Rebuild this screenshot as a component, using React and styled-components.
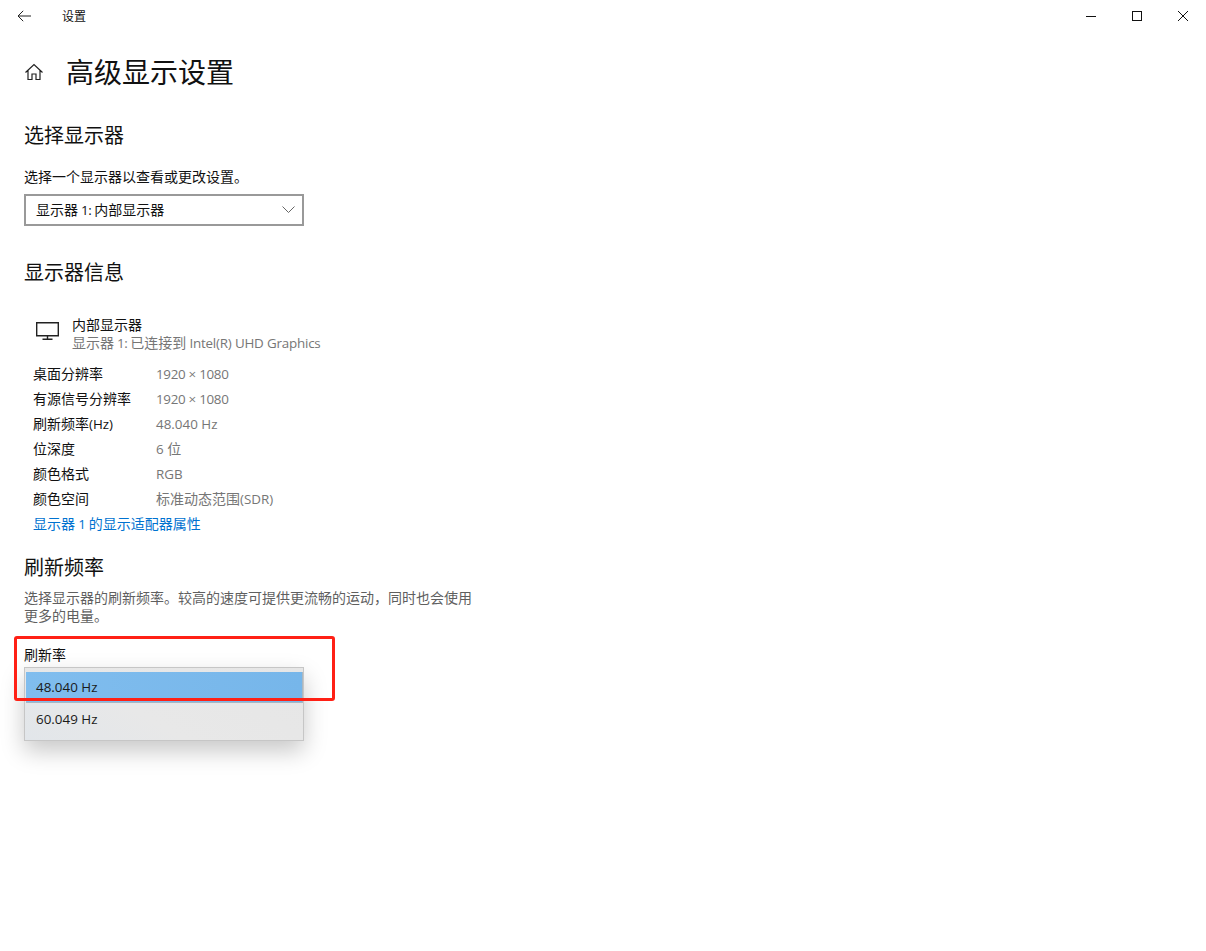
import React from "react";
import styled, { createGlobalStyle } from "styled-components";

const Global = createGlobalStyle`
  html, body { margin: 0; padding: 0; background: #fff; }
  body { font-family: "Noto Sans CJK SC", "Open Sans", sans-serif; color: #111; }
`;

const Page = styled.div`
  position: relative;
  width: 1206px;
  height: 951px;
  overflow: hidden;
  background: #fff;
`;

const Latin = styled.span`
  font-family: "Open Sans", "Noto Sans CJK SC", sans-serif;
  font-size: 13.4px;
  letter-spacing: ${(p) => p.$tight || 0}px;
`;

const TitleBar = styled.header`
  display: flex;
  align-items: center;
  height: 32px;
`;

const BackButton = styled.div`
  display: flex;
  align-items: center;
  justify-content: center;
  width: 48px;
  height: 32px;
`;

const AppName = styled.span`
  margin-left: 14px;
  font-size: 12px;
  line-height: 32px;
  color: #111;
`;

const WindowControls = styled.div`
  display: flex;
  margin-left: auto;
`;

const WindowButton = styled.div`
  display: flex;
  align-items: center;
  justify-content: center;
  width: 46px;
  height: 32px;
`;

const Content = styled.main`
  padding: 0 0 0 24px;
`;

const PageHead = styled.div`
  display: flex;
  align-items: center;
  height: 48px;
  margin-top: 16px;
`;

const HomeIcon = styled.svg`
  display: block;
  width: 20px;
  height: 20px;
`;

const PageTitle = styled.h1`
  margin: 0 0 2px 22px;
  font-size: 28px;
  font-weight: 400;
  line-height: 46px;
  color: #111;
`;

const SectionTitle = styled.h2`
  margin: ${(p) => p.$top}px 0 0;
  font-size: 20px;
  font-weight: 400;
  line-height: 28px;
  color: #111;
`;

const Label = styled.div`
  margin-top: ${(p) => p.$top}px;
  font-size: 14px;
  line-height: 20px;
  color: #111;
`;

const Select = styled.div`
  box-sizing: border-box;
  display: flex;
  align-items: center;
  justify-content: space-between;
  width: 280px;
  height: 32px;
  margin-top: 8px;
  padding: 0 7px 2px 10px;
  border: 2px solid #999;
  font-size: 14px;
  color: #111;
`;

const MonitorRow = styled.div`
  display: flex;
  margin: 29px 0 0 11px;
`;

const MonitorIcon = styled.svg`
  display: block;
  width: 25px;
  height: 20px;
  margin-top: 6px;
`;

const MonitorText = styled.div`
  margin-left: 12px;
`;

const MonitorName = styled.div`
  font-size: 14px;
  line-height: 18px;
  color: #111;
`;

const MonitorStatus = styled.div`
  font-size: 14px;
  line-height: 18px;
  color: #767676;
`;

const InfoList = styled.dl`
  margin: 8px 0 0 9px;
`;

const InfoRow = styled.div`
  display: flex;
  height: 25px;
  align-items: center;
  font-size: 14px;
`;

const InfoKey = styled.dt`
  width: 123px;
  color: #111;
`;

const InfoValue = styled.dd`
  margin: 0;
  color: #767676;
`;

const InfoLink = styled.a`
  display: block;
  margin: 1px 0 0 9px;
  font-size: 14px;
  line-height: 25px;
  color: #0072d0;
  text-decoration: none;
`;

const Paragraph = styled.p`
  width: 450px;
  margin: 7px 0 0;
  font-size: 14px;
  line-height: 18px;
  color: #5f5f5f;
`;

const RateField = styled.div`
  position: relative;
  width: 280px;
`;

const DropdownMenu = styled.div`
  position: absolute;
  left: 0;
  top: 3px;
  box-sizing: border-box;
  width: 280px;
  height: 74px;
  padding-top: 4px;
  border: 1px solid #c6c6c6;
  background: linear-gradient(30deg, #e2e6ea 0%, #e8e8e8 40%, #e6e6e6 100%);
  box-shadow: 0 10px 22px rgba(0, 0, 0, 0.22);
`;

const MenuItem = styled.div`
  box-sizing: border-box;
  display: flex;
  align-items: center;
  height: ${(p) => (p.$active ? 31 : 32)}px;
  margin-left: ${(p) => (p.$active ? 1 : 0)}px;
  padding-left: ${(p) => (p.$active ? 10 : 11)}px;
  color: #1a1a1a;
  background: ${(p) => (p.$active ? "linear-gradient(90deg, #80bdee, #76b6ea)" : "transparent")};
  border-right: ${(p) => (p.$active ? "1px solid #a9b7c2" : "none")};
  border-bottom: ${(p) => (p.$active ? "1px solid #a9b7c2" : "none")};
`;

const Highlight = styled.div`
  position: absolute;
  left: 14px;
  top: 636px;
  box-sizing: border-box;
  width: 321px;
  height: 65px;
  border: 3px solid #ff2015;
  border-radius: 3px;
  pointer-events: none;
`;

const rows = [
  ["桌面分辨率", <Latin $tight={-0.3}>1920 × 1080</Latin>],
  ["有源信号分辨率", <Latin $tight={-0.3}>1920 × 1080</Latin>],
  [<>刷新频率<Latin>(Hz)</Latin></>, <Latin>48.040 Hz</Latin>],
  ["位深度", <><Latin>6 </Latin>位</>],
  ["颜色格式", <Latin>RGB</Latin>],
  ["颜色空间", <>标准动态范围<Latin>(SDR)</Latin></>],
];

export default function App() {
  return (
    <Page>
      <Global />
      <TitleBar>
        <BackButton>
          <svg width="14" height="12" viewBox="0 0 14 12" fill="none" stroke="#222" strokeWidth="1">
            <path d="M1 6h13M6.200 .8 1 6l5.200 5.200" />
          </svg>
        </BackButton>
        <AppName>设置</AppName>
        <WindowControls>
          <WindowButton>
            <svg width="10" height="10" viewBox="0 0 10 10" stroke="#111" strokeWidth="1">
              <path d="M0 5.500h10" />
            </svg>
          </WindowButton>
          <WindowButton>
            <svg width="10" height="10" viewBox="0 0 10 10" fill="none" stroke="#111" strokeWidth="1">
              <rect x=".5" y=".5" width="9" height="9" />
            </svg>
          </WindowButton>
          <WindowButton>
            <svg width="10" height="10" viewBox="0 0 10 10" stroke="#111" strokeWidth="1">
              <path d="M0 0l10 10M10 0 0 10" />
            </svg>
          </WindowButton>
        </WindowControls>
      </TitleBar>
      <Content>
        <PageHead>
          <HomeIcon viewBox="0 0 20 20" fill="none" stroke="#222" strokeWidth="1.2">
            <path d="M1.500 10.500 10 2.500l8.500 8M4 8.500V17.500h4V12h4v5.500h4V8.500" />
          </HomeIcon>
          <PageTitle>高级显示设置</PageTitle>
        </PageHead>
        <SectionTitle $top={25}>选择显示器</SectionTitle>
        <Label $top={17}>选择一个显示器以查看或更改设置。</Label>
        <Select>
          <span>显示器<Latin $tight={-0.5}> 1: </Latin>内部显示器</span>
          <svg width="13" height="7" viewBox="0 0 13 7" fill="none" stroke="#666" strokeWidth="1">
            <path d="M.5 .5 6.500 6.500l6-6" />
          </svg>
        </Select>
        <SectionTitle $top={32}>显示器信息</SectionTitle>
        <MonitorRow>
          <MonitorIcon viewBox="0 0 25 20" fill="none" stroke="#222" strokeWidth="1.4">
            <path d="M1.700 1.700h21.600v13H1.700zM12.500 14.700v3.500M7.500 18.300h10" />
          </MonitorIcon>
          <MonitorText>
            <MonitorName>内部显示器</MonitorName>
            <MonitorStatus>显示器<Latin $tight={-0.5}> 1: </Latin>已连接到<Latin $tight={-0.2}> Intel(R) UHD Graphics</Latin></MonitorStatus>
          </MonitorText>
        </MonitorRow>
        <InfoList>
          {rows.map(([k, v], i) => (
            <InfoRow key={i}>
              <InfoKey>{k}</InfoKey>
              <InfoValue>{v}</InfoValue>
            </InfoRow>
          ))}
        </InfoList>
        <InfoLink>显示器<Latin $tight={-0.3}> 1 </Latin>的显示适配器属性</InfoLink>
        <SectionTitle $top={16}>刷新频率</SectionTitle>
        <Paragraph>选择显示器的刷新频率。较高的速度可提供更流畅的运动，同时也会使用更多的电量。</Paragraph>
        <Label $top={20}>刷新率</Label>
        <RateField>
          <DropdownMenu>
            <MenuItem $active><Latin>48.040 Hz</Latin></MenuItem>
            <MenuItem><Latin>60.049 Hz</Latin></MenuItem>
          </DropdownMenu>
        </RateField>
      </Content>
      <Highlight />
    </Page>
  );
}
